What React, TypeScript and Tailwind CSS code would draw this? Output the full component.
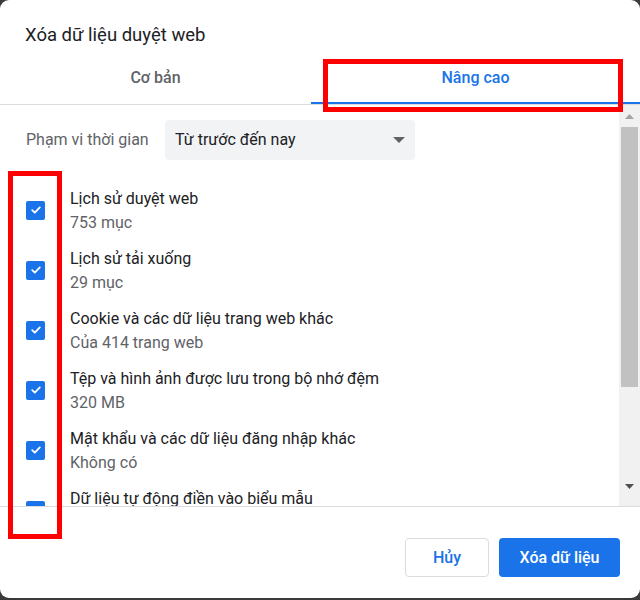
import React from "react";

type Item = { title: string; detail: string };

const items: Item[] = [
  { title: "Lịch sử duyệt web", detail: "753 mục" },
  { title: "Lịch sử tải xuống", detail: "29 mục" },
  { title: "Cookie và các dữ liệu trang web khác", detail: "Của 414 trang web" },
  { title: "Tệp và hình ảnh được lưu trong bộ nhớ đệm", detail: "320 MB" },
  { title: "Mật khẩu và các dữ liệu đăng nhập khác", detail: "Không có" },
  { title: "Dữ liệu tự động điền vào biểu mẫu", detail: "" },
];

function CheckBox() {
  return (
    <div className="flex h-[19px] w-[19px] shrink-0 items-center justify-center rounded-[2px] bg-[#1a73e8]">
      <svg width="12" height="12" viewBox="0 0 12 12" fill="none">
        <path d="M2.2 6.2 L4.8 8.6 L9.8 3.4" stroke="white" strokeWidth="1.8" strokeLinecap="round" strokeLinejoin="round" />
      </svg>
    </div>
  );
}

function ScrollBar() {
  return (
    <div className="flex w-[21px] shrink-0 flex-col bg-[#f1f1f1]">
      <div className="flex h-[22px] items-center justify-center">
        <svg width="9" height="5" viewBox="0 0 9 5">
          <path d="M0 5 L4.5 0 L9 5 Z" fill="#a3a3a3" />
        </svg>
      </div>
      <div className="h-[260px] px-[2px]">
        <div className="h-full bg-[#c1c1c1]" />
      </div>
      <div className="flex-1" />
      <div className="flex h-[40px] items-center justify-center">
        <svg width="9" height="5" viewBox="0 0 9 5">
          <path d="M0 0 L9 0 L4.5 5 Z" fill="#505050" />
        </svg>
      </div>
    </div>
  );
}

export default function App() {
  return (
    <div
      className="relative h-[600px] w-[640px] overflow-hidden bg-[#3a3a3a]"
      style={{ fontFamily: "Roboto, 'Noto Sans', sans-serif" }}
    >
      <div className="flex h-[598px] w-[640px] flex-col overflow-hidden rounded-[9px] bg-white">
        {/* title */}
        <div className="h-[54px] pl-[25px] pt-[24px] text-[18.5px] leading-[22px] text-[#202124]">
          Xóa dữ liệu duyệt web
        </div>

        {/* tabs */}
        <div className="flex border-b border-[#dadce0]">
          <div className="flex h-[50px] w-[311px] items-center justify-center pb-[2px] text-[16px] font-medium text-[#5f6368]">
            Cơ bản
          </div>
          <div className="flex h-[50px] flex-1 items-center justify-center border-b-2 border-[#1a73e8] text-[16px] font-medium text-[#1a73e8]">
            Nâng cao
          </div>
        </div>

        {/* scrollable body */}
        <div className="flex h-[402px] border-b border-[#dadce0]">
          <div className="flex-1 overflow-hidden pt-[15px]">
            <div className="flex items-center pl-[26px]">
              <span className="w-[139px] text-[16px] text-[#5f6368]">Phạm vi thời gian</span>
              <div className="flex h-[40px] w-[250px] items-center justify-between rounded-[4px] bg-[#f1f3f4] pl-[10px] pr-[10px]">
                <span className="text-[16px] text-[#202124]">Từ trước đến nay</span>
                <svg width="12" height="6" viewBox="0 0 12 6">
                  <path d="M0 0 L12 0 L6 6 Z" fill="#5f6368" />
                </svg>
              </div>
            </div>

            <div className="mt-[20px]">
              {items.map((it) => (
                <div key={it.title} className="flex h-[60px] items-center gap-[25px] pl-[26px]">
                  <CheckBox />
                  <div className="pt-[1px] text-[16px] leading-[24px]">
                    <div className="text-[#202124]">{it.title}</div>
                    <div className="h-[24px] text-[#5f6368]">{it.detail}</div>
                  </div>
                </div>
              ))}
            </div>
          </div>
          <ScrollBar />
        </div>

        {/* footer */}
        <div className="flex flex-1 items-start justify-end gap-[10px] pr-[20px] pt-[31px]">
          <button className="h-[39px] w-[84px] rounded-[4px] border border-[#dadce0] bg-white text-[16px] font-medium text-[#1a73e8]">
            Hủy
          </button>
          <button className="h-[39px] w-[121px] rounded-[4px] bg-[#1a73e8] text-[16px] font-medium text-white">
            Xóa dữ liệu
          </button>
        </div>
      </div>

      {/* red highlight frames */}
      <div className="absolute left-[323px] top-[59px] h-[53px] w-[300px] border-[5px] border-[#ff0000]" />
      <div className="absolute left-[8px] top-[171px] h-[368px] w-[54px] border-[5px] border-[#ff0000]" />
    </div>
  );
}
